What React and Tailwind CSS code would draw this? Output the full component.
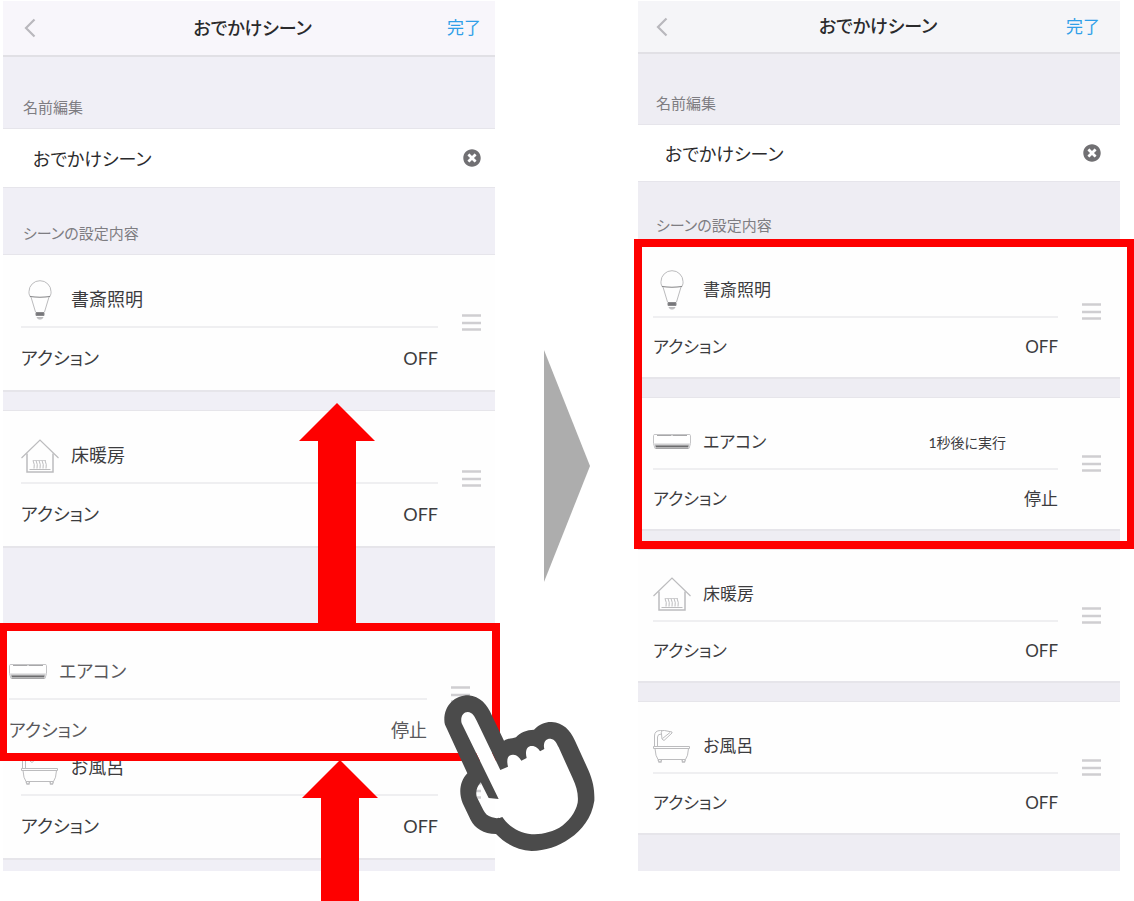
import { useId, useState } from "react";
import { FaTimesCircle } from "react-icons/fa";

// the two phone screens are shown at slightly different scales
const LARGE = {
  header: "h-14 pl-[21px] pr-[14px] bg-[#f8f6fb]",
  done: "text-[17px]",
  firstLabel: "h-[72px] pl-5 pb-[11px]",
  secondLabel: "h-[68px] pl-5 pb-[11px]",
  inputRow: "h-[58px] pl-[30px] pr-[14px]",
  gap: "h-[21px]",
  card: "pl-[18px] pr-[14px]",
  nameRow: "h-[71px] pt-[18px] gap-3",
  valueRow: "h-[62px] pb-0.5",
  text: "text-[18px]",
  surface: "bg-[#f0eff6]",
};

const SMALL = {
  header: "h-[53px] pl-[18px] pr-5 bg-[#f5f5f8]",
  done: "text-[17px]",
  firstLabel: "h-[71px] pl-[18px] pb-[11px]",
  secondLabel: "h-[65px] pl-[18px] pb-[10px]",
  inputRow: "h-14 pl-[27px] pr-[19px]",
  gap: "h-[21px]",
  card: "pl-[15px] pr-[19px]",
  nameRow: "h-[70px] pt-[18px] gap-3",
  valueRow: "h-[59px] pb-0.5",
  text: "text-[17px]",
  surface: "bg-[#eeedf3]",
};

function BulbIcon() {
  return (
    <svg width="38" height="40" viewBox="0 0 38 40" fill="none" stroke="#bbbbbd">
      <path d="M9.500 17C7.500 14 8 12 8 11.500a11 10.800 0 0 1 22 0C30 12 30.500 14 28.500 17" />
      <path d="M9 16.500q10 1.500 20 0" stroke="#858587" strokeWidth="1.200" />
      <path d="M10 17l4.500 15M28 17l-4.500 15" />
      <path d="M15 32.500h8v3h-8z" fill="#77777a" stroke="#8a8a8d" />
      <path d="M16 37.500h6l-1.500 1.500h-3z" fill="#c4c4c6" />
    </svg>
  );
}

function HouseIcon() {
  return (
    <svg width="38" height="36" viewBox="0 0 38 36" fill="none" stroke="#bcbcbe">
      <path d="M.5 20L19 2l18.500 18" strokeWidth="1.200" />
      <path d="M6 15.500V34h26V15.500" strokeWidth="1.500" />
      <path d="M8.500 31.500h21" />
      <path d="M12 22.500q2 4 1 8M15 22.500q2 4 1 8M18 22.500q2 4 1 8M21 22.500q2 4 1 8M24 22.500q2 4 1 8" />
      <path d="M12 22.500h13" strokeWidth=".7" />
    </svg>
  );
}

function AirconIcon() {
  return (
    <svg width="38" height="16" viewBox="0 0 38 16" fill="none">
      <path d="M.5 1.500Q.5.500 2 .5h34q1.500 0 1.500 1v8l-1.500 5H2l-1.500-5z" fill="#fff" stroke="#c4c4c6" />
      <path d="M4 1.500h14.500M19.500 1.500H34" stroke="#a8a8aa" />
      <path d="M1 9.500h36L36 12H2z" fill="#cfcfd1" />
      <path d="M2.500 12.500h33" stroke="#6c6c6e" strokeWidth="2" />
      <path d="M3 14.500h32" stroke="#a5a5a7" />
    </svg>
  );
}

function BathIcon() {
  return (
    <svg width="38" height="34" viewBox="0 0 38 34" fill="none" stroke="#bcbcbe">
      <path d="M1.500 17V7q0-5.500 6-5.500h2M4.500 17V8q0-3 4-3" />
      <path d="M8.500 5q-1-4 3-3.500l7.500 1.500v1l-8 7.500-2-1.500z" />
      <path d="M17 3.500L9.500 9.500" />
      <path d="M.5 17.500h36v2H.5z" />
      <path d="M2 19.500q.5 8 3 11h27.500q2.500-3 3-11" />
      <path d="M5 30.500l1 2.500h2l.5-2.500M29 30.500l.5 2.500h2l1-2.500" strokeWidth="1.300" />
    </svg>
  );
}

const DEVICES = {
  light: { name: "書斎照明", icon: BulbIcon, value: "OFF" },
  floor: { name: "床暖房", icon: HouseIcon, value: "OFF" },
  aircon: { name: "エアコン", icon: AirconIcon, value: "停止" },
  bath: { name: "お風呂", icon: BathIcon, value: "OFF" },
};

function Header({ size }) {
  return (
    <header
      className={`grid grid-cols-[1fr_auto_1fr] items-center border-b-2 border-[#e1e0e5] ${size.header}`}
    >
      <button type="button" aria-label="戻る" className="justify-self-start">
        <svg width="12" height="20" viewBox="0 0 12 20" fill="none" stroke="#b9b8bd" strokeWidth="2.200">
          <path d="M10.500 1.500L2 10l8.500 8.500" />
        </svg>
      </button>
      <h1 className="text-[18px] font-medium text-[#2a2a2c]">おでかけシーン</h1>
      <button type="button" className={`justify-self-end text-[#2f9fe8] ${size.done}`}>
        完了
      </button>
    </header>
  );
}

function NameField({ size }) {
  const id = useId();
  const [name, setName] = useState("おでかけシーン");

  return (
    <>
      <label
        htmlFor={id}
        className={`flex items-end border-b border-[#e6e5eb] text-[15px] leading-5 text-[#7e7d82] ${size.firstLabel}`}
      >
        名前編集
      </label>
      <div className={`flex items-center bg-white ${size.inputRow}`}>
        <input
          id={id}
          type="text"
          value={name}
          onChange={(e) => setName(e.target.value)}
          className="min-w-0 flex-1 bg-transparent pt-0.5 text-[18px] text-[#2a2a2c] outline-none"
        />
        <button type="button" aria-label="クリア" onClick={() => setName("")}>
          <FaTimesCircle size={18} className="text-[#717073]" />
        </button>
      </div>
    </>
  );
}

function SectionLabel({ size }) {
  return (
    <h2
      className={`flex items-end border-y border-[#e6e5eb] text-[15px] leading-5 text-[#7e7d82] ${size.secondLabel}`}
    >
      シーンの設定内容
    </h2>
  );
}

function DeviceCard({ device, size, note, muted }) {
  const Icon = device.icon;

  return (
    <article
      className={`flex items-center gap-6 bg-[#fefefe] ${muted ? "text-[#59585b]" : "text-[#3c3c3e]"} ${size.card}`}
    >
      <div className="min-w-0 flex-1">
        <div className={`flex items-center ${size.nameRow}`}>
          <div className="flex w-[38px] shrink-0 justify-center">
            <Icon />
          </div>
          <h3 className={size.text}>{device.name}</h3>
          {note && <p className="ml-auto pr-[52px] text-[14px]">{note}</p>}
        </div>
        <div className="h-0.5 bg-[#efeff1]" />
        <div className={`flex items-center justify-between ${size.valueRow} ${size.text}`}>
          <span>アクション</span>
          <span>{device.value}</span>
        </div>
      </div>
      <button type="button" aria-label="並べ替え" className="shrink-0">
        <svg width="19" height="18" viewBox="0 0 19 18" stroke="#cfced1" strokeWidth="2.500">
          <path d="M0 1.500h19M0 9h19M0 15.500h19" />
        </svg>
      </button>
    </article>
  );
}

function Gap({ size }) {
  return <div className={`border-y border-t-2 border-[#e6e5ea] ${size.gap}`} />;
}

function UpArrow({ height, className }) {
  return (
    <svg
      width="76"
      height={height}
      viewBox={`0 0 76 ${height}`}
      fill="#fe0000"
      className={`pointer-events-none absolute ${className}`}
    >
      <path d={`M38 0L76 38H57V${height}H19V38H0z`} />
    </svg>
  );
}

function HandIcon() {
  return (
    <svg
      width="180"
      height="190"
      viewBox="0 0 540 570"
      className="pointer-events-none absolute top-[669px] -right-[115px]"
    >
      <path
        fill="#fff"
        d="M95 160C90 140 100 126 113 126C128 127 134 140 140 152L211 300L234 290C228 265 235 253 250 254C262 255 268 262 274 272L290 264C284 240 292 228 305 228C318 228 325 236 330 244L343 237C338 217 348 205 362 206C375 208 380 220 386 232L428 325C440 350 446 375 443 398C436 430 415 455 388 473C360 488 330 493 305 493C265 488 235 468 217 441L186 442L206 387Z"
      />
      <path
        fill="#4b4b4b"
        fillRule="evenodd"
        d="M43 150C43 105 75 76 115 76C150 78 172 105 185 135L222 212C235 204 248 206 258 202C272 186 290 180 312 179C330 160 350 155 365 156C400 158 420 180 435 212L475 300C490 335 494 360 493 392C485 445 455 480 420 505C385 530 345 543 305 543C260 540 225 520 198 492C160 492 135 475 122 450L98 400C86 370 88 335 112 310L50 175C45 165 43 160 43 150Z
           M95 160C90 140 100 126 113 126C128 127 134 140 140 152L211 300L234 290C228 265 235 253 250 254C262 255 268 262 274 272L290 264C284 240 292 228 305 228C318 228 325 236 330 244L343 237C338 217 348 205 362 206C375 208 380 220 386 232L428 325C440 350 446 375 443 398C436 430 415 455 388 473C360 488 330 493 305 493C265 488 235 468 217 441C205 446 195 445 186 442C172 438 165 430 160 420L140 380C136 362 142 350 152 337L176 384L206 387Z"
      />
    </svg>
  );
}

function BeforeScreen() {
  return (
    <section className={`relative z-10 self-start ${LARGE.surface}`}>
      <Header size={LARGE} />
      <NameField size={LARGE} />
      <SectionLabel size={LARGE} />
      <DeviceCard device={DEVICES.light} size={LARGE} />
      <Gap size={LARGE} />
      <DeviceCard device={DEVICES.floor} size={LARGE} />
      {/* slot left open by the card being dragged */}
      <div className="h-[177px] border-y border-t-2 border-[#e6e5ea]" />
      <DeviceCard device={DEVICES.bath} size={LARGE} />
      <div className="h-[13px] border-t-2 border-[#e6e5ea]" />

      <UpArrow height={222} className="top-[402px] left-[296px]" />
      <UpArrow height={141} className="top-[759px] left-[299px]" />

      <div className="absolute top-[622px] -right-[5px] -left-1 h-[138px] overflow-hidden border-8 border-[#fe0000] bg-[#fefefe]">
        <div className="-mt-1 -ml-4 mr-2">
          <DeviceCard device={DEVICES.aircon} size={LARGE} muted />
        </div>
      </div>
      <HandIcon />
    </section>
  );
}

function AfterScreen() {
  return (
    <section className={`self-start ${SMALL.surface}`}>
      <Header size={SMALL} />
      <NameField size={SMALL} />
      <SectionLabel size={SMALL} />
      <div className="relative">
        <DeviceCard device={DEVICES.light} size={SMALL} />
        <Gap size={SMALL} />
        <DeviceCard device={DEVICES.aircon} size={SMALL} note="1秒後に実行" />
        <div className="pointer-events-none absolute -top-[7px] -right-[15px] -bottom-5 -left-1 border-8 border-[#fe0000]" />
      </div>
      <Gap size={SMALL} />
      <DeviceCard device={DEVICES.floor} size={SMALL} />
      <Gap size={SMALL} />
      <DeviceCard device={DEVICES.bath} size={SMALL} />
      <div className="h-[38px] border-t-2 border-[#e6e5ea]" />
    </section>
  );
}

export default function App() {
  return (
    <main className="grid min-h-screen grid-cols-[492fr_143px_482fr] overflow-hidden bg-white pt-px pr-[14px] pl-[3px] font-[Lato,'Noto_Sans_CJK_JP',sans-serif] [font-feature-settings:'palt']">
      <BeforeScreen />
      <div className="flex justify-center pt-[349px]">
        <svg width="46" height="232" viewBox="0 0 46 232" fill="#adadad">
          <path d="M0 0l46 116L0 232z" />
        </svg>
      </div>
      <AfterScreen />
    </main>
  );
}
